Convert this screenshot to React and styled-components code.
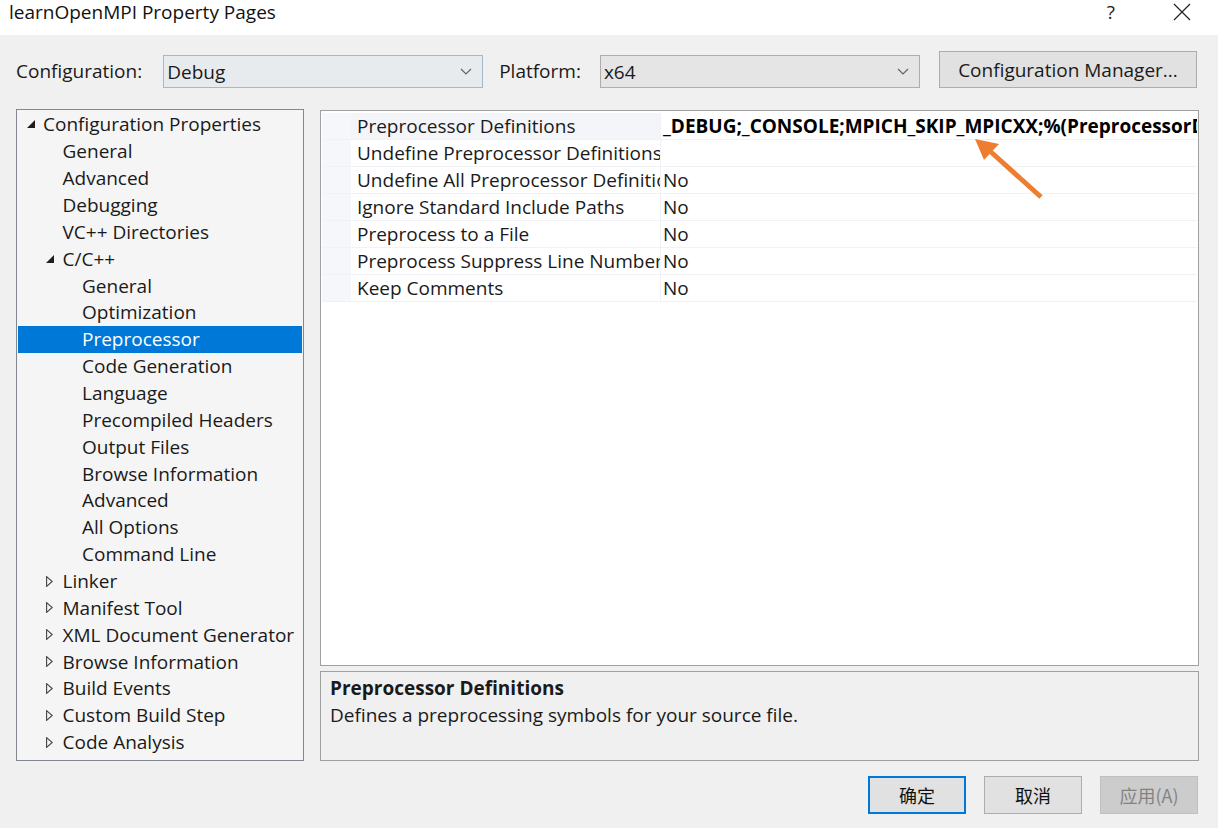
import React from 'react'
import styled, { createGlobalStyle } from 'styled-components'

const GlobalStyle = createGlobalStyle`
  html, body {
    margin: 0;
    padding: 0;
    background: #f0f0f0;
  }
  body {
    font-family: "Open Sans", "Noto Sans", "Noto Sans CJK SC", sans-serif;
    color: #1a1a1a;
  }
`

const treeItems = [
  { label: 'Configuration Properties', level: 0, icon: 'open' },
  { label: 'General', level: 1 },
  { label: 'Advanced', level: 1 },
  { label: 'Debugging', level: 1 },
  { label: 'VC++ Directories', level: 1 },
  { label: 'C/C++', level: 1, icon: 'open' },
  { label: 'General', level: 2 },
  { label: 'Optimization', level: 2 },
  { label: 'Preprocessor', level: 2, selected: true },
  { label: 'Code Generation', level: 2 },
  { label: 'Language', level: 2 },
  { label: 'Precompiled Headers', level: 2 },
  { label: 'Output Files', level: 2 },
  { label: 'Browse Information', level: 2 },
  { label: 'Advanced', level: 2 },
  { label: 'All Options', level: 2 },
  { label: 'Command Line', level: 2 },
  { label: 'Linker', level: 1, icon: 'closed' },
  { label: 'Manifest Tool', level: 1, icon: 'closed' },
  { label: 'XML Document Generator', level: 1, icon: 'closed' },
  { label: 'Browse Information', level: 1, icon: 'closed' },
  { label: 'Build Events', level: 1, icon: 'closed' },
  { label: 'Custom Build Step', level: 1, icon: 'closed' },
  { label: 'Code Analysis', level: 1, icon: 'closed' },
]

const props = [
  { name: 'Preprocessor Definitions', value: '_DEBUG;_CONSOLE;MPICH_SKIP_MPICXX;%(PreprocessorDefinitions)', bold: true, current: true },
  { name: 'Undefine Preprocessor Definitions', value: '' },
  { name: 'Undefine All Preprocessor Definitions', value: 'No' },
  { name: 'Ignore Standard Include Paths', value: 'No' },
  { name: 'Preprocess to a File', value: 'No' },
  { name: 'Preprocess Suppress Line Numbers', value: 'No' },
  { name: 'Keep Comments', value: 'No' },
]

const Window = styled.div`
  width: 1218px;
  height: 828px;
  display: flex;
  flex-direction: column;
  background: #f0f0f0;
  overflow: hidden;
`

const TitleBar = styled.div`
  height: 35px;
  background: #fff;
  display: flex;
  align-items: center;
  padding-left: 9px;
  font-size: 19px;
  color: #111;
`

const TitleText = styled.div`
  flex: 1;
  margin-top: -11px;
`

const TitleButton = styled.div`
  height: 35px;
  display: flex;
  align-items: center;
  justify-content: center;
  margin-top: -12px;
  margin-right: ${p => p.after}px;
  font-size: 19px;
  color: #222;
`

const Content = styled.div`
  flex: 1;
  display: flex;
  flex-direction: column;
  padding: 17px 19px 0 16px;
`

const TopRow = styled.div`
  display: flex;
  align-items: center;
  height: 37px;
  font-size: 19px;
`

const Label = styled.span`
  margin-right: ${p => p.gap}px;
`

const Combo = styled.div`
  width: ${p => p.width}px;
  height: 33px;
  box-sizing: border-box;
  border: 1px solid ${p => (p.focused ? '#a7b8c9' : '#adadad')};
  background: ${p => (p.focused ? '#e8ebee' : '#e5e5e5')};
  display: flex;
  align-items: center;
  padding: 0 10px 0 3px;
  margin-right: ${p => p.after}px;
  margin-top: 2px;
  span { flex: 1; }
`

const PushButton = styled.div`
  width: 258px;
  height: 37px;
  box-sizing: border-box;
  border: 1px solid #adadad;
  background: #e1e1e1;
  display: flex;
  align-items: center;
  justify-content: center;
  margin-left: auto;
  margin-right: 2px;
  margin-top: -2px;
`

const Main = styled.div`
  display: grid;
  grid-template-columns: 288px 1fr;
  column-gap: 16px;
  margin-top: 20px;
  height: 650px;
`

const Tree = styled.div`
  border: 1px solid #828790;
  background: #f5f5f5;
  padding: 1px 1px;
  font-size: 19px;
`

const TreeRow = styled.div`
  height: 26.87px;
  display: flex;
  align-items: center;
  padding-left: ${p => 25 + p.level * 19.5}px;
  background: ${p => (p.selected ? '#0078d7' : 'transparent')};
  color: ${p => (p.selected ? '#fff' : '#1a1a1a')};
  white-space: nowrap;
  position: relative;
  svg { position: absolute; left: ${p => 9 + p.level * 19}px; }
`

const RightCol = styled.div`
  display: flex;
  flex-direction: column;
  gap: 5px;
  margin-top: 1px;
`

const Grid = styled.div`
  height: 556px;
  box-sizing: border-box;
  border: 1px solid #a0a0a0;
  background: #fff;
  padding: 2px 1px;
  font-size: 19px;
  position: relative;
`

const PropRow = styled.div`
  display: grid;
  grid-template-columns: 29px 310px 1fr;
  height: 27px;
  border-bottom: 1px solid #f0f2f8;
  box-sizing: border-box;
`

const Gutter = styled.div`
  background: #f5f7fa;
`

const NameCell = styled.div`
  background: ${p => (p.current ? '#f3f5f9' : '#fff')};
  border-right: 1px solid #f0f2f8;
  padding-left: 6px;
  display: flex;
  align-items: center;
  overflow: hidden;
  white-space: nowrap;
`

const ValueCell = styled.div`
  padding-left: 2px;
  display: flex;
  align-items: center;
  overflow: hidden;
  white-space: nowrap;
  font-weight: ${p => (p.bold ? 700 : 400)};
  color: ${p => (p.bold ? '#000' : '#1a1a1a')};
`

const Arrow = styled.svg`
  position: absolute;
  left: 648px;
  top: 24px;
`

const Description = styled.div`
  height: 90px;
  box-sizing: border-box;
  border: 1px solid #a0a0a0;
  background: #f0f0f0;
  padding: 3px 9px;
  font-size: 19px;
  line-height: 27px;
`

const DescTitle = styled.div`
  font-weight: 700;
`

const Footer = styled.div`
  display: flex;
  justify-content: flex-end;
  gap: 18px;
  margin-top: 17px;
  margin-right: 1px;
`

const DialogButton = styled.div`
  width: 98px;
  height: 38px;
  box-sizing: border-box;
  border: ${p => (p.primary ? '2px solid #0078d7' : p.disabled ? '1px solid #bfbfbf' : '1px solid #adadad')};
  background: ${p => (p.disabled ? '#cccccc' : '#e1e1e1')};
  color: ${p => (p.disabled ? '#838383' : '#111')};
  display: flex;
  align-items: center;
  justify-content: center;
  font-family: "Noto Sans CJK SC", sans-serif;
  font-size: 18px;
`

const Chevron = () => (
  <svg width="12" height="7" viewBox="0 0 12 7">
    <path d="M1 1 L6 6 L11 1" fill="none" stroke="#606060" strokeWidth="1.1" />
  </svg>
)

const OpenIcon = () => (
  <svg width="8" height="8" viewBox="0 0 8 8">
    <polygon points="8,0 8,8 0,8" fill="#1e1e1e" />
  </svg>
)

const ClosedIcon = () => (
  <svg width="7" height="11" viewBox="0 0 7 11">
    <polygon points="0.6,0.6 6.2,5.5 0.6,10.4" fill="none" stroke="#444" strokeWidth="1.1" />
  </svg>
)

const CloseIcon = () => (
  <svg width="18" height="18" viewBox="0 0 18 18">
    <path d="M1 1 L17 17 M17 1 L1 17" stroke="#222" strokeWidth="1.2" />
  </svg>
)

export default function App() {
  return (
    <Window>
      <GlobalStyle />
      <TitleBar>
        <TitleText>learnOpenMPI Property Pages</TitleText>
        <TitleButton after={58}>?</TitleButton>
        <TitleButton after={27}><CloseIcon /></TitleButton>
      </TitleBar>
      <Content>
        <TopRow>
          <Label gap={21}>Configuration:</Label>
          <Combo width={320} after={16} focused>
            <span>Debug</span>
            <Chevron />
          </Combo>
          <Label gap={19}>Platform:</Label>
          <Combo width={320}>
            <span>x64</span>
            <Chevron />
          </Combo>
          <PushButton>Configuration Manager...</PushButton>
        </TopRow>
        <Main>
          <Tree>
            {treeItems.map((item, i) => (
              <TreeRow key={i} level={item.level} selected={item.selected}>
                {item.icon === 'open' && <OpenIcon />}
                {item.icon === 'closed' && <ClosedIcon />}
                {item.label}
              </TreeRow>
            ))}
          </Tree>
          <RightCol>
            <Grid>
              {props.map((p, i) => (
                <PropRow key={i}>
                  <Gutter />
                  <NameCell current={p.current}>{p.name}</NameCell>
                  <ValueCell bold={p.bold}>{p.value}</ValueCell>
                </PropRow>
              ))}
              <Arrow width="80" height="70" viewBox="0 0 80 70">
                <line x1="72" y1="62" x2="22" y2="17" stroke="#ed7d31" strokeWidth="5" />
                <polygon points="6,4 30,9 15,25" fill="#ed7d31" />
              </Arrow>
            </Grid>
            <Description>
              <DescTitle>Preprocessor Definitions</DescTitle>
              <div>Defines a preprocessing symbols for your source file.</div>
            </Description>
          </RightCol>
        </Main>
        <Footer>
          <DialogButton primary>确定</DialogButton>
          <DialogButton>取消</DialogButton>
          <DialogButton disabled>应用(A)</DialogButton>
        </Footer>
      </Content>
    </Window>
  )
}
